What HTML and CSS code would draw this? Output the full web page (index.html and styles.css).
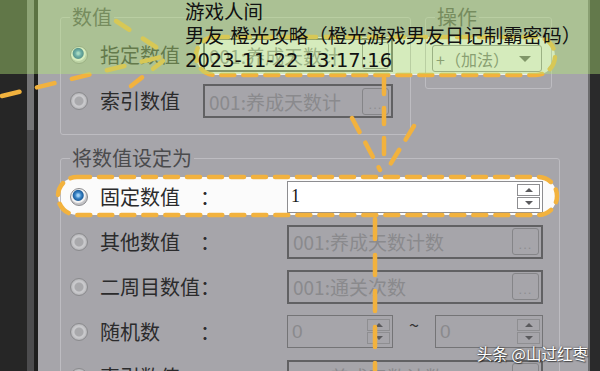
FILE: index.html
```html
<!DOCTYPE html>
<html lang="zh">
<head>
<meta charset="utf-8">
<link rel="stylesheet" href="styles.css">
</head>
<body>
<div class="screen">
  <div class="strip-dark"></div>
  <div class="scrollbar"><div class="thumb"></div></div>
  <div class="strip-line"></div>
  <div class="panel">
    <div class="hl hl-top"></div>
    <div class="hl hl-low"></div>
    <div class="content">
      <div class="top-groups">
        <fieldset class="group g-value">
          <legend>数值</legend>
          <div class="row">
            <span class="radio on"></span><span class="lbl">指定数值</span>
            <div class="field f-top"><span>001:养成天数计</span><span class="dots">...</span></div>
          </div>
          <div class="row">
            <span class="radio"></span><span class="lbl">索引数值</span>
            <div class="field f-top"><span>001:养成天数计</span><span class="dots">...</span></div>
          </div>
        </fieldset>
        <fieldset class="group g-op">
          <legend>操作</legend>
          <div class="combo"><span>+（加法）</span><span class="caret"></span></div>
        </fieldset>
      </div>
      <fieldset class="group g-set">
        <legend>将数值设定为</legend>
        <div class="row2">
          <span class="radio on"></span><span class="lbl2">固定数值</span><span class="colon">：</span>
          <div class="field f-wide f-white"><span class="num">1</span><span class="spin"><span class="sb up"></span><span class="sb down"></span></span></div>
        </div>
        <div class="row2">
          <span class="radio"></span><span class="lbl2">其他数值</span><span class="colon">：</span>
          <div class="field f-wide"><span>001:养成天数计数</span><span class="dots">...</span></div>
        </div>
        <div class="row2">
          <span class="radio"></span><span class="lbl2">二周目数值</span><span class="colon">：</span>
          <div class="field f-wide"><span>001:通关次数</span><span class="dots">...</span></div>
        </div>
        <div class="row2">
          <span class="radio"></span><span class="lbl2">随机数</span><span class="colon">：</span>
          <div class="field f-small"><span class="zero">0</span><span class="spin"><span class="sb up"></span><span class="sb down"></span></span></div>
          <span class="tilde">~</span>
          <div class="field f-small f-small2"><span class="zero">0</span><span class="spin"><span class="sb up"></span><span class="sb down"></span></span></div>
        </div>
        <div class="row2">
          <span class="radio"></span><span class="lbl2">索引数值</span><span class="colon">：</span>
          <div class="field f-wide"><span>001:养成天数计数</span><span class="dots">...</span></div>
        </div>
      </fieldset>
    </div>
  </div>
  <div class="strip-right"></div>

  <svg class="annot" width="600" height="371" viewBox="0 0 600 371">
    <g fill="none" stroke="#f2b23e" stroke-width="4.5" stroke-linecap="round">
      <rect x="196" y="37" width="359" height="38" rx="19" stroke-dasharray="13 9"/>
      <rect x="58" y="177" width="499" height="38" rx="19" stroke-dasharray="13 9"/>
      <path d="M2,96 L165,56" stroke-dasharray="18 18"/>
      <path d="M116,21 L165,53" stroke-dasharray="16 16"/>
      <path d="M131,86 L163,61" stroke-dasharray="14 14"/>
      <path d="M384,78 L384,168" stroke-dasharray="16 14"/>
      <path d="M352,118 L380,170" stroke-dasharray="16 12"/>
      <path d="M414,126 L388,168" stroke-dasharray="16 12"/>
      <path d="M375,219 L375,371" stroke-dasharray="20 16"/>
    </g>
  </svg>
  <div class="tint"></div>
  <div class="caption">
    <div>游戏人间</div>
    <div>男友 橙光攻略（橙光游戏男友日记制霸密码）</div>
    <div>2023-11-22 13:17:16</div>
  </div>
  <div class="wm">头条 @山过红枣</div>
</div>
</body>
</html>
```
FILE: styles.css
```css
* { box-sizing: border-box; }
html, body { margin: 0; padding: 0; }
body {
  width: 600px;
  height: 371px;
  overflow: hidden;
  font-family: "Noto Sans CJK SC", "Noto Sans", sans-serif;
}
.screen {
  position: relative;
  width: 600px;
  height: 371px;
  display: flex;
  overflow: hidden;
  background: #a6a5aa;
}
.strip-dark { width: 27px; background: #262626; }
.scrollbar { width: 7px; background: #4c4c4e; display: flex; flex-direction: column; }
.thumb { height: 130px; background: #747476; }
.strip-line { width: 4px; background: #1e1e1e; }
.strip-right { width: 12px; background: #2a2a2b; border-left: 2px solid #6c6c6e; }

.panel {
  position: relative;
  width: 550px;
  background: #a6a5aa;
  padding: 7px 0 0 22px;
}
.hl {
  position: absolute;
  background: #fbfbfb;
  border-radius: 19px;
  z-index: 0;
}
.hl-top { left: 158px; top: 37px; width: 359px; height: 38px; background: #eeeeee; }
.hl-low { left: 20px; top: 177px; width: 499px; height: 38px; }
.content { position: relative; z-index: 1; }

.top-groups { display: flex; gap: 14px; align-items: flex-start; }
.group {
  margin: 0;
  padding: 0;
  min-width: 0;
  border: 1px solid #bdbcc1;
  border-radius: 3px;
}
.group legend {
  font-size: 20px;
  line-height: 20px;
  color: #4b4b4d;
  padding: 0 2px;
  margin-left: 9px;
}
.g-value { width: 351px; padding: 5px 0 10px 0; }
.g-op { width: 127px; padding: 18px 0 16px 0; }
.g-set { width: 500px; margin-top: 13px; padding: 6px 0 20px 0; }

.row { display: flex; align-items: center; height: 46px; }
.row2 { display: flex; align-items: center; height: 45px; }

.radio {
  flex: none;
  width: 18px;
  height: 18px;
  margin-left: 9px;
  border-radius: 50%;
  border: 1px solid #8b8b8e;
  background: radial-gradient(circle at 50% 50%, #a9a9ac 0 4px, #c9c9cc 5px 6px, #b4b4b7 8px);
}
.radio.on {
  background: radial-gradient(circle at 45% 40%, #9fd0f5 0 1px, #3b86c8 3px, #1d5f9e 5px, #f2f2f2 6px 7px, #c4c4c7 8px);
}
.lbl { width: 103px; margin-left: 12px; font-size: 20px; color: #2b2b2c; line-height: 24px; }
.lbl2 { width: 100px; margin-left: 12px; font-size: 20px; color: #2b2b2c; line-height: 24px; white-space: nowrap; }
.colon { width: 87px; font-size: 20px; color: #2b2b2c; line-height: 24px; }

.field {
  flex: none;
  display: flex;
  align-items: center;
  justify-content: space-between;
  height: 34px;
  border: 2px solid #616163;
  padding: 0 2px 0 4px;
  font-size: 19px;
  color: #8a8a8d;
  white-space: nowrap;
}
.f-top { width: 190px; }
.f-wide { width: 256px; }
.f-white {
  height: 32px;
  background: #ffffff;
  border: 1px solid #8d8d90;
  padding: 0 2px 0 3px;
}
.num { font-family: "Liberation Serif", serif; font-size: 18px; color: #1a1a1a; }
.f-small { width: 106px; height: 33px; border-width: 1px; border-color: #747476; }
.f-small2 { width: 108px; }
.zero { font-family: "Liberation Sans", sans-serif; font-size: 19px; color: #8a8a8d; }
.tilde { width: 42px; text-align: center; font-size: 18px; line-height: 18px; color: #333; margin-top: -16px; }

.dots {
  width: 27px;
  height: 27px;
  border: 1px solid #858588;
  border-radius: 3px;
  display: flex;
  align-items: flex-end;
  justify-content: center;
  font-family: "Liberation Sans", sans-serif;
  font-size: 13px;
  line-height: 18px;
  color: #8d8d90;
  letter-spacing: 1px;
}
.spin { display: flex; flex-direction: column; gap: 1px; width: 23px; }
.sb {
  height: 12px;
  border: 1px solid #8e8e91;
  display: flex;
  align-items: center;
  justify-content: center;
}
.sb::after {
  content: "";
  border-left: 4px solid transparent;
  border-right: 4px solid transparent;
}
.up::after { border-bottom: 4px solid #5a5a5d; }
.down::after { border-top: 4px solid #5a5a5d; }

.combo {
  width: 110px;
  height: 27px;
  margin-left: 6px;
  border: 1px solid #8a8a8d;
  border-radius: 3px;
  display: flex;
  align-items: center;
  justify-content: space-between;
  padding: 0 10px 0 3px;
  font-size: 16px;
  color: #6c6c6f;
  white-space: nowrap;
}
.caret {
  flex: none;
  border-left: 6px solid transparent;
  border-right: 6px solid transparent;
  border-top: 6px solid #5c5c5f;
}

.annot { position: absolute; left: 0; top: 0; z-index: 2; }
.tint {
  position: absolute;
  left: 0; top: 0;
  width: 600px;
  height: 74px;
  background: rgba(178, 230, 120, 0.42);
  z-index: 3;
}
.caption {
  position: absolute;
  left: 185px;
  top: 1px;
  z-index: 4;
  font-family: "DejaVu Sans", "Noto Sans CJK SC", sans-serif;
  font-size: 19.5px;
  line-height: 24px;
  color: #111;
  white-space: nowrap;
}
.wm {
  position: absolute;
  right: 12px;
  bottom: 7px;
  z-index: 4;
  font-size: 15.5px;
  line-height: 22px;
  color: #ffffff;
  text-shadow: 0 0 2px rgba(0,0,0,0.7), 1px 1px 1px rgba(0,0,0,0.5);
}
```
